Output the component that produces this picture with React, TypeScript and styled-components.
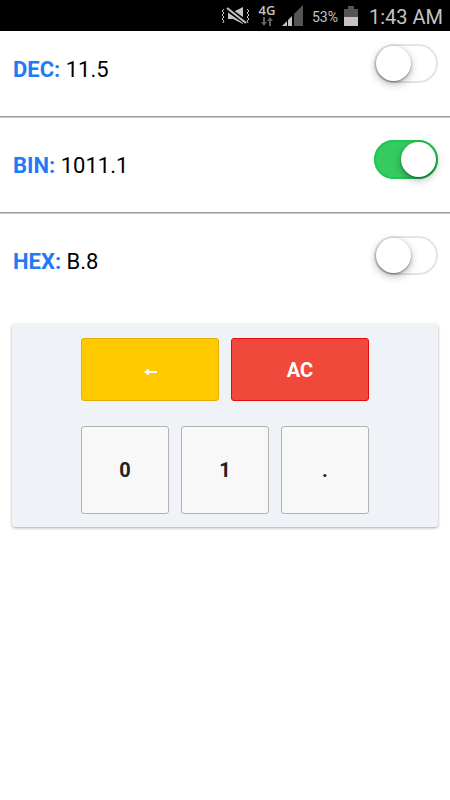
import React, { useState } from "react";
import styled, { createGlobalStyle } from "styled-components";

const GlobalStyle = createGlobalStyle`
  *, *::before { box-sizing: border-box; }
  body {
    margin: 0;
    background: #fff;
    color: #000;
    font-family: Roboto, "Liberation Sans", sans-serif;
  }
`;

const StatusBar = styled.header`
  display: flex;
  align-items: center;
  justify-content: flex-end;
  height: 31px;
  padding-right: 9px;
  background: #000;
  color: #c4c4c4;
`;

const StatusIcon = styled.svg`
  display: block;
  flex: none;
`;

const Network = styled.div`
  display: flex;
  flex-direction: column;
  align-items: center;
  width: 18px;
  margin: 0 6px 2px 7px;
  font: 600 13px/14px "Open Sans", sans-serif;
`;

const Percent = styled.span`
  width: 28px;
  margin: 2px 4px 0 9px;
  font: 400 14px/20px Roboto, sans-serif;
  white-space: nowrap;
`;

const Clock = styled.time`
  width: 72px;
  margin: 3px 0 0 11px;
  font: 400 20px/24px Roboto, sans-serif;
  white-space: nowrap;
`;

const Row = styled.div`
  display: flex;
  align-items: flex-start;
  justify-content: space-between;
  height: 76px;
  padding: 13px 12px 0 13px;
`;

const Reading = styled.label`
  padding-top: 12px;
  font-size: 22px;
  line-height: 28px;
`;

const Base = styled.strong`
  color: #1f7bf5;
  font-weight: 700;
`;

const Divider = styled.hr`
  height: 2px;
  margin: 9px 0;
  border: 0;
  border-top: 1px solid #9c9c9c;
  border-bottom: 1px solid #c9c9c9;
`;

const Switch = styled.input`
  appearance: none;
  width: 64px;
  height: 39px;
  margin: 0;
  padding: 2px;
  border-radius: 20px;
  background: #fff;
  box-shadow: inset 0 0 0 2px #e4e4e4;
  cursor: pointer;

  &::before {
    content: "";
    display: block;
    width: 35px;
    height: 35px;
    border-radius: 50%;
    background: #fff;
    box-shadow: 0 3px 8px rgba(0, 0, 0, 0.3), 0 1px 2px rgba(0, 0, 0, 0.4);
  }

  &:checked {
    background: #34cb61;
    box-shadow: inset 0 0 0 2px #22c653;
  }

  &:checked::before {
    margin-left: auto;
  }
`;

const Main = styled.main`
  padding-bottom: 24px;
`;

const Keypad = styled.section`
  display: flex;
  flex-direction: column;
  gap: 25px;
  margin: 25px 12px 0;
  padding: 14px 12px 13px;
  border-radius: 3px;
  background: #eff2f7;
  box-shadow: 0 1px 3px rgba(0, 0, 0, 0.35);
`;

const KeyRow = styled.div`
  display: flex;
  justify-content: center;
  gap: 12px;
`;

const tones = {
  plain: { fill: "#f8f8f8", edge: "#b2b2b2", ink: "#222" },
  warning: { fill: "#ffc900", edge: "#e6ae00", ink: "#fff" },
  danger: { fill: "#f0483a", edge: "#e60a0a", ink: "#fff" },
};

const Key = styled.button<{ $tone: keyof typeof tones; $wide?: boolean }>`
  display: flex;
  align-items: center;
  justify-content: center;
  width: ${(p) => (p.$wide ? 138 : 88)}px;
  height: ${(p) => (p.$wide ? 63 : 88)}px;
  padding: 0;
  border: 1px solid ${(p) => tones[p.$tone].edge};
  border-radius: 3px;
  background: ${(p) => tones[p.$tone].fill};
  color: ${(p) => tones[p.$tone].ink};
  font: 700 20px/28px Roboto, "Liberation Sans", sans-serif;
  cursor: pointer;
`;

const readings = [
  { base: "DEC", value: "11.5" },
  { base: "BIN", value: "1011.1" },
  { base: "HEX", value: "B.8" },
];

export default function App() {
  const [active, setActive] = useState("BIN");
  return (
    <>
      <GlobalStyle />
      <StatusBar>
        <StatusIcon width="30" height="20" viewBox="0 0 30 20" fill="none" aria-label="Vibrate">
          <path d="M7 6h5l10-5v17l-10-5H7z" fill="#c4c4c4" />
          <path d="M5 2l21 15" stroke="#000" strokeWidth="5" />
          <path d="M6 2l19 15" stroke="#c4c4c4" strokeWidth="2" />
          <path
            d="M3 3L1 5l2 2-2 2 2 2-2 2 2 2-1 2M26 3l2 2-2 2 2 2-2 2 2 2-2 2 1 2"
            stroke="#c4c4c4"
          />
        </StatusIcon>
        <Network>
          4G
          <StatusIcon width="12" height="9" viewBox="0 0 12 9" fill="#626262" aria-hidden="true">
            <path d="M2 0h2v5h2L3 9 0 5h2zM8 9h2V4h2L9 0 6 4h2z" />
          </StatusIcon>
        </Network>
        <StatusIcon width="21" height="21" viewBox="0 0 21 21" aria-label="Signal">
          <path d="M12 9l9-9v21h-9z" fill="#555" />
          <path d="M0 21l5-5v5zM6 15l4-4v10H6z" fill="#c4c4c4" />
        </StatusIcon>
        <Percent>53%</Percent>
        <StatusIcon width="14" height="20" viewBox="0 0 14 20" aria-label="Battery">
          <path d="M4 0h6v3h4v8H0V3h4z" fill="#555" />
          <path d="M0 11h14v9H0z" fill="#c4c4c4" />
        </StatusIcon>
        <Clock>1:43 AM</Clock>
      </StatusBar>
      <Main>
        {readings.map(({ base, value }, i) => (
          <React.Fragment key={base}>
            {i > 0 && <Divider />}
            <Row>
              <Reading htmlFor={base}>
                <Base>{base}:</Base> {value}
              </Reading>
              <Switch
                id={base}
                type="checkbox"
                role="switch"
                checked={active === base}
                onChange={() => setActive(base)}
              />
            </Row>
          </React.Fragment>
        ))}
        <Keypad aria-label="Keypad">
          <KeyRow>
            <Key $tone="warning" $wide aria-label="Backspace">
              <svg width="13" height="13" viewBox="0 0 13 13" fill="#fff" aria-hidden="true">
                <path d="M0 9l4-3h1v2h8v2H5v2H4z" />
              </svg>
            </Key>
            <Key $tone="danger" $wide>AC</Key>
          </KeyRow>
          <KeyRow>
            <Key $tone="plain">0</Key>
            <Key $tone="plain">1</Key>
            <Key $tone="plain">.</Key>
          </KeyRow>
        </Keypad>
      </Main>
    </>
  );
}
